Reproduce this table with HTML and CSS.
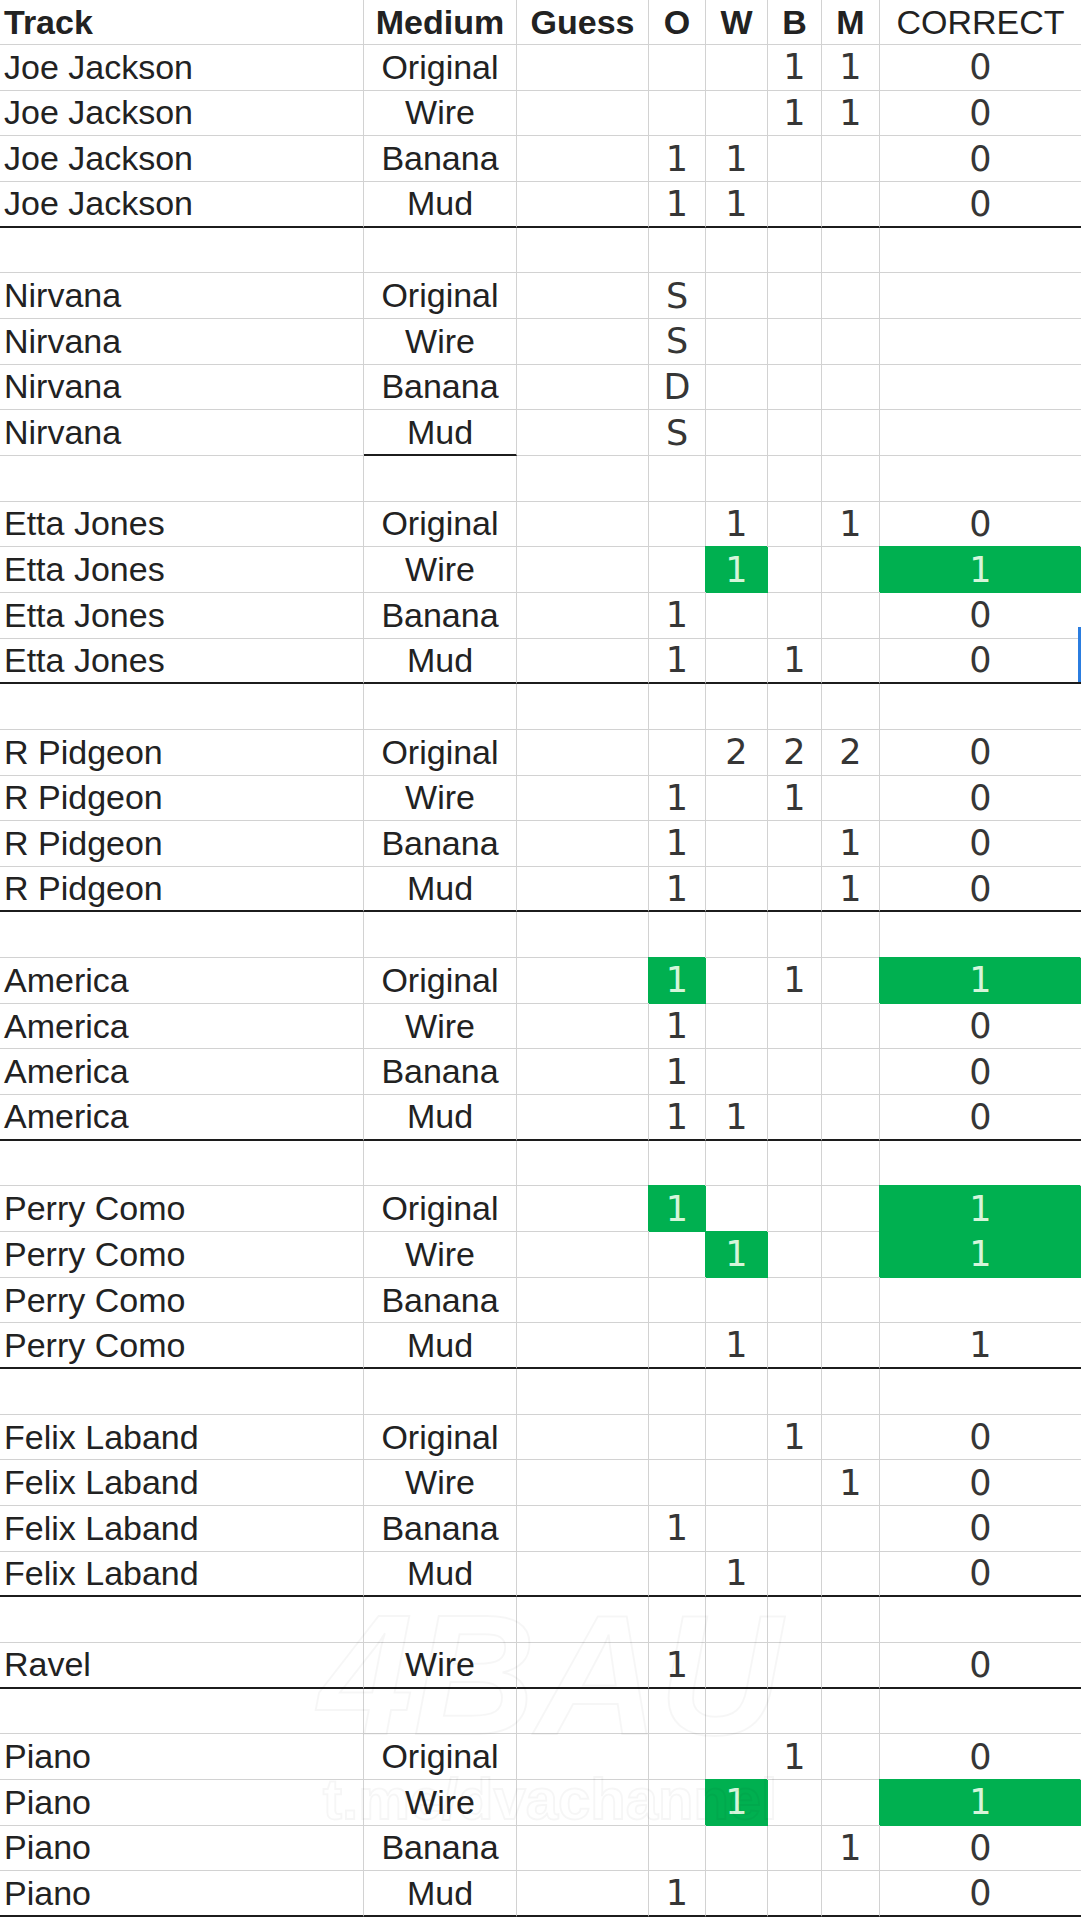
FILE: index.html
```html
<!DOCTYPE html>
<html>
<head>
<meta charset="utf-8">
<link rel="stylesheet" href="styles.css">
</head>
<body>
<div class="sheet">
  <div class="row head">
    <div class="cell t b">Track</div><div class="cell b">Medium</div><div class="cell b">Guess</div><div class="cell b">O</div><div class="cell b">W</div><div class="cell b">B</div><div class="cell b">M</div><div class="cell">CORRECT</div>
  </div>

  <div class="row"><div class="cell t">Joe Jackson</div><div class="cell">Original</div><div class="cell"></div><div class="cell n"></div><div class="cell n"></div><div class="cell n">1</div><div class="cell n">1</div><div class="cell n">0</div></div>
  <div class="row"><div class="cell t">Joe Jackson</div><div class="cell">Wire</div><div class="cell"></div><div class="cell n"></div><div class="cell n"></div><div class="cell n">1</div><div class="cell n">1</div><div class="cell n">0</div></div>
  <div class="row"><div class="cell t">Joe Jackson</div><div class="cell">Banana</div><div class="cell"></div><div class="cell n">1</div><div class="cell n">1</div><div class="cell n"></div><div class="cell n"></div><div class="cell n">0</div></div>
  <div class="row end"><div class="cell t">Joe Jackson</div><div class="cell">Mud</div><div class="cell"></div><div class="cell n">1</div><div class="cell n">1</div><div class="cell n"></div><div class="cell n"></div><div class="cell n">0</div></div>
  <div class="row"><div class="cell t"></div><div class="cell"></div><div class="cell"></div><div class="cell n"></div><div class="cell n"></div><div class="cell n"></div><div class="cell n"></div><div class="cell n"></div></div>

  <div class="row"><div class="cell t">Nirvana</div><div class="cell">Original</div><div class="cell"></div><div class="cell n">S</div><div class="cell n"></div><div class="cell n"></div><div class="cell n"></div><div class="cell n"></div></div>
  <div class="row"><div class="cell t">Nirvana</div><div class="cell">Wire</div><div class="cell"></div><div class="cell n">S</div><div class="cell n"></div><div class="cell n"></div><div class="cell n"></div><div class="cell n"></div></div>
  <div class="row"><div class="cell t">Nirvana</div><div class="cell">Banana</div><div class="cell"></div><div class="cell n">D</div><div class="cell n"></div><div class="cell n"></div><div class="cell n"></div><div class="cell n"></div></div>
  <div class="row"><div class="cell t">Nirvana</div><div class="cell thick">Mud</div><div class="cell"></div><div class="cell n">S</div><div class="cell n"></div><div class="cell n"></div><div class="cell n"></div><div class="cell n"></div></div>
  <div class="row"><div class="cell t"></div><div class="cell"></div><div class="cell"></div><div class="cell n"></div><div class="cell n"></div><div class="cell n"></div><div class="cell n"></div><div class="cell n"></div></div>

  <div class="row"><div class="cell t">Etta Jones</div><div class="cell">Original</div><div class="cell"></div><div class="cell n"></div><div class="cell n">1</div><div class="cell n"></div><div class="cell n">1</div><div class="cell n">0</div></div>
  <div class="row"><div class="cell t">Etta Jones</div><div class="cell">Wire</div><div class="cell"></div><div class="cell n"></div><div class="cell n g">1</div><div class="cell n"></div><div class="cell n"></div><div class="cell n g">1</div></div>
  <div class="row"><div class="cell t">Etta Jones</div><div class="cell">Banana</div><div class="cell"></div><div class="cell n">1</div><div class="cell n"></div><div class="cell n"></div><div class="cell n"></div><div class="cell n">0</div></div>
  <div class="row end"><div class="cell t">Etta Jones</div><div class="cell">Mud</div><div class="cell"></div><div class="cell n">1</div><div class="cell n"></div><div class="cell n">1</div><div class="cell n"></div><div class="cell n sel">0</div></div>
  <div class="row"><div class="cell t"></div><div class="cell"></div><div class="cell"></div><div class="cell n"></div><div class="cell n"></div><div class="cell n"></div><div class="cell n"></div><div class="cell n"></div></div>

  <div class="row"><div class="cell t">R Pidgeon</div><div class="cell">Original</div><div class="cell"></div><div class="cell n"></div><div class="cell n">2</div><div class="cell n">2</div><div class="cell n">2</div><div class="cell n">0</div></div>
  <div class="row"><div class="cell t">R Pidgeon</div><div class="cell">Wire</div><div class="cell"></div><div class="cell n">1</div><div class="cell n"></div><div class="cell n">1</div><div class="cell n"></div><div class="cell n">0</div></div>
  <div class="row"><div class="cell t">R Pidgeon</div><div class="cell">Banana</div><div class="cell"></div><div class="cell n">1</div><div class="cell n"></div><div class="cell n"></div><div class="cell n">1</div><div class="cell n">0</div></div>
  <div class="row end"><div class="cell t">R Pidgeon</div><div class="cell">Mud</div><div class="cell"></div><div class="cell n">1</div><div class="cell n"></div><div class="cell n"></div><div class="cell n">1</div><div class="cell n">0</div></div>
  <div class="row"><div class="cell t"></div><div class="cell"></div><div class="cell"></div><div class="cell n"></div><div class="cell n"></div><div class="cell n"></div><div class="cell n"></div><div class="cell n"></div></div>

  <div class="row"><div class="cell t">America</div><div class="cell">Original</div><div class="cell"></div><div class="cell n g">1</div><div class="cell n"></div><div class="cell n">1</div><div class="cell n"></div><div class="cell n g">1</div></div>
  <div class="row"><div class="cell t">America</div><div class="cell">Wire</div><div class="cell"></div><div class="cell n">1</div><div class="cell n"></div><div class="cell n"></div><div class="cell n"></div><div class="cell n">0</div></div>
  <div class="row"><div class="cell t">America</div><div class="cell">Banana</div><div class="cell"></div><div class="cell n">1</div><div class="cell n"></div><div class="cell n"></div><div class="cell n"></div><div class="cell n">0</div></div>
  <div class="row end"><div class="cell t">America</div><div class="cell">Mud</div><div class="cell"></div><div class="cell n">1</div><div class="cell n">1</div><div class="cell n"></div><div class="cell n"></div><div class="cell n">0</div></div>
  <div class="row"><div class="cell t"></div><div class="cell"></div><div class="cell"></div><div class="cell n"></div><div class="cell n"></div><div class="cell n"></div><div class="cell n"></div><div class="cell n"></div></div>

  <div class="row"><div class="cell t">Perry Como</div><div class="cell">Original</div><div class="cell"></div><div class="cell n g">1</div><div class="cell n"></div><div class="cell n"></div><div class="cell n"></div><div class="cell n g">1</div></div>
  <div class="row"><div class="cell t">Perry Como</div><div class="cell">Wire</div><div class="cell"></div><div class="cell n"></div><div class="cell n g">1</div><div class="cell n"></div><div class="cell n"></div><div class="cell n g">1</div></div>
  <div class="row"><div class="cell t">Perry Como</div><div class="cell">Banana</div><div class="cell"></div><div class="cell n"></div><div class="cell n"></div><div class="cell n"></div><div class="cell n"></div><div class="cell n"></div></div>
  <div class="row end"><div class="cell t">Perry Como</div><div class="cell">Mud</div><div class="cell"></div><div class="cell n"></div><div class="cell n">1</div><div class="cell n"></div><div class="cell n"></div><div class="cell n">1</div></div>
  <div class="row"><div class="cell t"></div><div class="cell"></div><div class="cell"></div><div class="cell n"></div><div class="cell n"></div><div class="cell n"></div><div class="cell n"></div><div class="cell n"></div></div>

  <div class="row"><div class="cell t">Felix Laband</div><div class="cell">Original</div><div class="cell"></div><div class="cell n"></div><div class="cell n"></div><div class="cell n">1</div><div class="cell n"></div><div class="cell n">0</div></div>
  <div class="row"><div class="cell t">Felix Laband</div><div class="cell">Wire</div><div class="cell"></div><div class="cell n"></div><div class="cell n"></div><div class="cell n"></div><div class="cell n">1</div><div class="cell n">0</div></div>
  <div class="row"><div class="cell t">Felix Laband</div><div class="cell">Banana</div><div class="cell"></div><div class="cell n">1</div><div class="cell n"></div><div class="cell n"></div><div class="cell n"></div><div class="cell n">0</div></div>
  <div class="row end"><div class="cell t">Felix Laband</div><div class="cell">Mud</div><div class="cell"></div><div class="cell n"></div><div class="cell n">1</div><div class="cell n"></div><div class="cell n"></div><div class="cell n">0</div></div>
  <div class="row"><div class="cell t"></div><div class="cell"></div><div class="cell"></div><div class="cell n"></div><div class="cell n"></div><div class="cell n"></div><div class="cell n"></div><div class="cell n"></div></div>

  <div class="row end"><div class="cell t">Ravel</div><div class="cell">Wire</div><div class="cell"></div><div class="cell n">1</div><div class="cell n"></div><div class="cell n"></div><div class="cell n"></div><div class="cell n">0</div></div>
  <div class="row"><div class="cell t"></div><div class="cell"></div><div class="cell"></div><div class="cell n"></div><div class="cell n"></div><div class="cell n"></div><div class="cell n"></div><div class="cell n"></div></div>

  <div class="row"><div class="cell t">Piano</div><div class="cell">Original</div><div class="cell"></div><div class="cell n"></div><div class="cell n"></div><div class="cell n">1</div><div class="cell n"></div><div class="cell n">0</div></div>
  <div class="row"><div class="cell t">Piano</div><div class="cell">Wire</div><div class="cell"></div><div class="cell n"></div><div class="cell n g">1</div><div class="cell n"></div><div class="cell n"></div><div class="cell n g">1</div></div>
  <div class="row"><div class="cell t">Piano</div><div class="cell">Banana</div><div class="cell"></div><div class="cell n"></div><div class="cell n"></div><div class="cell n"></div><div class="cell n">1</div><div class="cell n">0</div></div>
  <div class="row end"><div class="cell t">Piano</div><div class="cell">Mud</div><div class="cell"></div><div class="cell n">1</div><div class="cell n"></div><div class="cell n"></div><div class="cell n"></div><div class="cell n">0</div></div>

  <div class="watermark" aria-hidden="true">
    <div class="wm-big">4BAU</div>
    <div class="wm-small">t.me/dvachannel</div>
  </div>
</div>
</body>
</html>
```

FILE: styles.css
```css
html, body {
  margin: 0;
  padding: 0;
  background: #ffffff;
}

.sheet {
  position: relative;
  width: 1081px;
  font-family: "Liberation Sans", Arial, sans-serif;
  font-size: 34px;
  color: #222222;
  overflow: hidden;
}

.row {
  display: grid;
  grid-template-columns: 364px 153px 132px 57px 62px 54px 58px 201px;
  height: 45.66px;
}

.row.head {
  height: 45px;
}

.cell {
  box-sizing: border-box;
  display: flex;
  align-items: center;
  justify-content: center;
  border-right: 1px solid #d2d2d2;
  border-bottom: 1px solid #d2d2d2;
  white-space: nowrap;
  line-height: normal;
}

.cell:last-child {
  border-right: none;
}

.cell.t {
  justify-content: flex-start;
  padding-left: 4px;
}

.cell.b {
  font-weight: bold;
}

.cell.n {
  font-family: "DejaVu Sans", sans-serif;
  font-size: 35px;
  color: #363636;
}

.row.end .cell,
.cell.thick {
  border-bottom: 2px solid #1c1c1c;
}

.cell.g {
  background: #00b050;
  color: #d6f5da;
  border-right-color: #00b050;
  border-bottom-color: #00b050;
  box-shadow: -1px -1px 0 #00b050;
}

.cell.sel {
  position: relative;
}

.cell.sel::after {
  content: "";
  position: absolute;
  right: 0;
  top: -12px;
  bottom: 0;
  width: 3px;
  background: #2b7de0;
}

.watermark {
  position: absolute;
  left: 280px;
  top: 1590px;
  width: 540px;
  pointer-events: none;
  display: flex;
  flex-direction: column;
  align-items: center;
  font-family: "Liberation Sans", sans-serif;
  color: transparent;
  -webkit-text-stroke: 2px rgba(0, 0, 0, 0.035);
}

.wm-big {
  font-size: 170px;
  font-weight: bold;
  font-style: italic;
  line-height: 1;
}

.wm-small {
  font-size: 58px;
  font-weight: bold;
  line-height: 1;
  margin-top: 10px;
}
```
